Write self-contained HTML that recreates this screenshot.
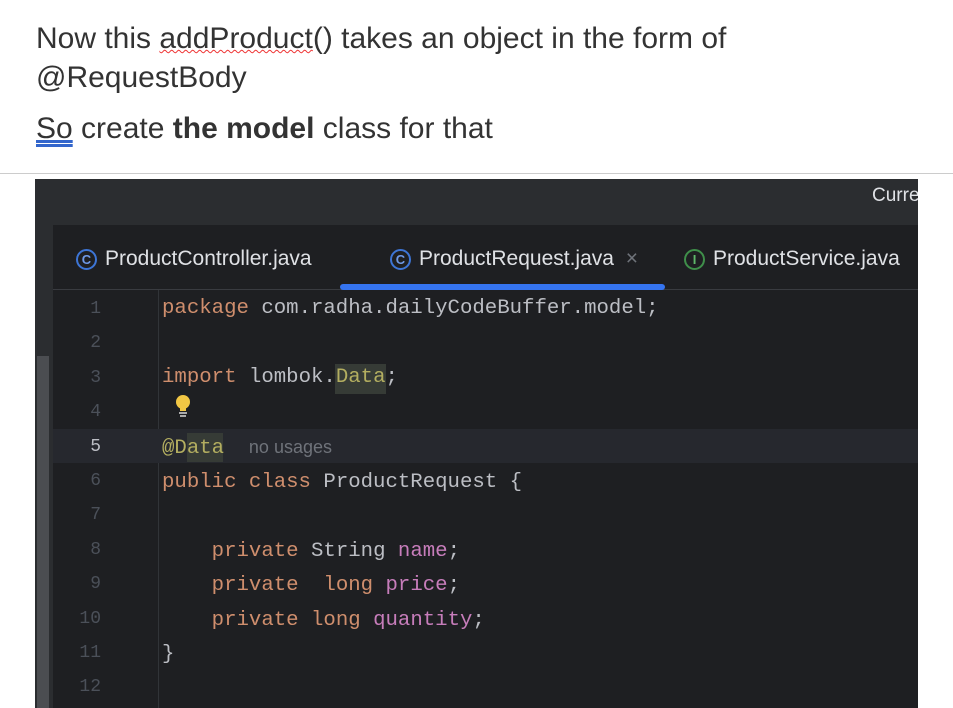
<!DOCTYPE html>
<html><head><meta charset="utf-8"><style>
html,body{margin:0;width:953px;height:708px;overflow:hidden}
body{background:#fff;position:relative;font-family:"Liberation Sans",sans-serif}
.t{position:absolute;left:36px;color:#333;font-size:30px;white-space:nowrap}
.ide{position:absolute;left:35px;top:179px;width:883px;height:529px;background:#1e1f22;overflow:hidden}
.top{position:absolute;left:0;top:0;width:883px;height:46px;background:#2b2d30}
.strip{position:absolute;left:0;top:46px;width:18px;height:483px;background:#2b2d30}
.sb{position:absolute;left:2px;top:131px;width:12px;height:360px;background:#4b4d51}
.tab{position:absolute;top:68px;color:#dfe1e5;font-size:21px;white-space:nowrap}
.ic{display:inline-block;width:17px;height:17px;border:2px solid #3d75d6;border-radius:50%;color:#6f9ae8;font-size:13px;line-height:17px;text-align:center;vertical-align:1px;margin-right:8px;font-weight:bold}
.code{position:absolute;left:127px;font-family:"Liberation Mono",monospace;font-size:20.7px;white-space:pre;color:#bcbec4;line-height:34.4px}
.ln{position:absolute;width:30px;text-align:right;left:36px;font-family:"Liberation Mono",monospace;font-size:18px;color:#4b5059;line-height:34.4px}
.k{color:#cf8e6d}.a{color:#b3ae60}.p{color:#c77dbb}
</style></head><body>
<div class="t" style="top:22px">Now this <span style="text-decoration:underline wavy #e33;text-decoration-thickness:1px">addProduct</span>() takes an object in the form of</div>
<div class="t" style="top:61px">@RequestBody</div>
<div class="t" style="top:112px"><span style="text-decoration:underline double #36c">So</span> create <b>the model</b> class for that</div>
<div style="position:absolute;left:0;top:173px;width:953px;height:1px;background:#ccc"></div>
<div class="ide">
<div class="top"></div>
<div style="position:absolute;left:837px;top:6px;color:#dfe1e5;font-size:19px">Curre</div>
<div class="strip"><div class="sb"></div></div>
<div style="position:absolute;left:18px;top:110px;width:865px;height:1px;background:#393b40"></div>
<div class="tab" style="left:41px"><span class="ic">C</span>ProductController.java</div>
<div class="tab" style="left:355px"><span class="ic">C</span>ProductRequest.java <span style="color:#6f737a;margin-left:6px">×</span></div>
<div class="tab" style="left:649px"><span class="ic" style="border-color:#3f8f4a;color:#5fb86a">I</span>ProductService.java</div>
<div style="position:absolute;left:305px;top:105px;width:325px;height:6px;background:#3574f0;border-radius:3px"></div>
<div style="position:absolute;left:123px;top:111px;width:1px;height:418px;background:#313438"></div>
<div style="position:absolute;left:18px;top:250px;width:865px;height:34px;background:#26282e"></div>
<div style="position:absolute;left:300px;top:185px;width:51px;height:30px;background:#363b36"></div>
<div style="position:absolute;left:152px;top:254px;width:36px;height:29px;background:#363b36"></div>
<div class="ln" style="top:113px">1<br>2<br>3<br>4<br><span style="color:#bcbec4">5</span><br>6<br>7<br>8<br>9<br>10<br>11<br>12</div>
<div class="code" style="top:113px"><span class="k">package</span> com.radha.dailyCodeBuffer.model;

<span class="k">import</span> lombok.<span class="a">Data</span>;

<span class="a">@Data</span>  <span style="font-family:'Liberation Sans',sans-serif;font-size:18px;color:#6f737a">no usages</span>
<span class="k">public class</span> ProductRequest {

    <span class="k">private</span> String <span class="p">name</span>;
    <span class="k">private</span>  <span class="k">long</span> <span class="p">price</span>;
    <span class="k">private long</span> <span class="p">quantity</span>;
}</div>
<svg style="position:absolute;left:139px;top:215px" width="18" height="26" viewBox="0 0 18 26"><circle cx="9" cy="8" r="7" fill="#f2c744"/><rect x="6" y="13" width="6" height="4" fill="#f2c744"/><rect x="5" y="18" width="8" height="2" fill="#aaa"/><rect x="6" y="21" width="6" height="2" fill="#aaa"/></svg>
</div>
</body></html>
